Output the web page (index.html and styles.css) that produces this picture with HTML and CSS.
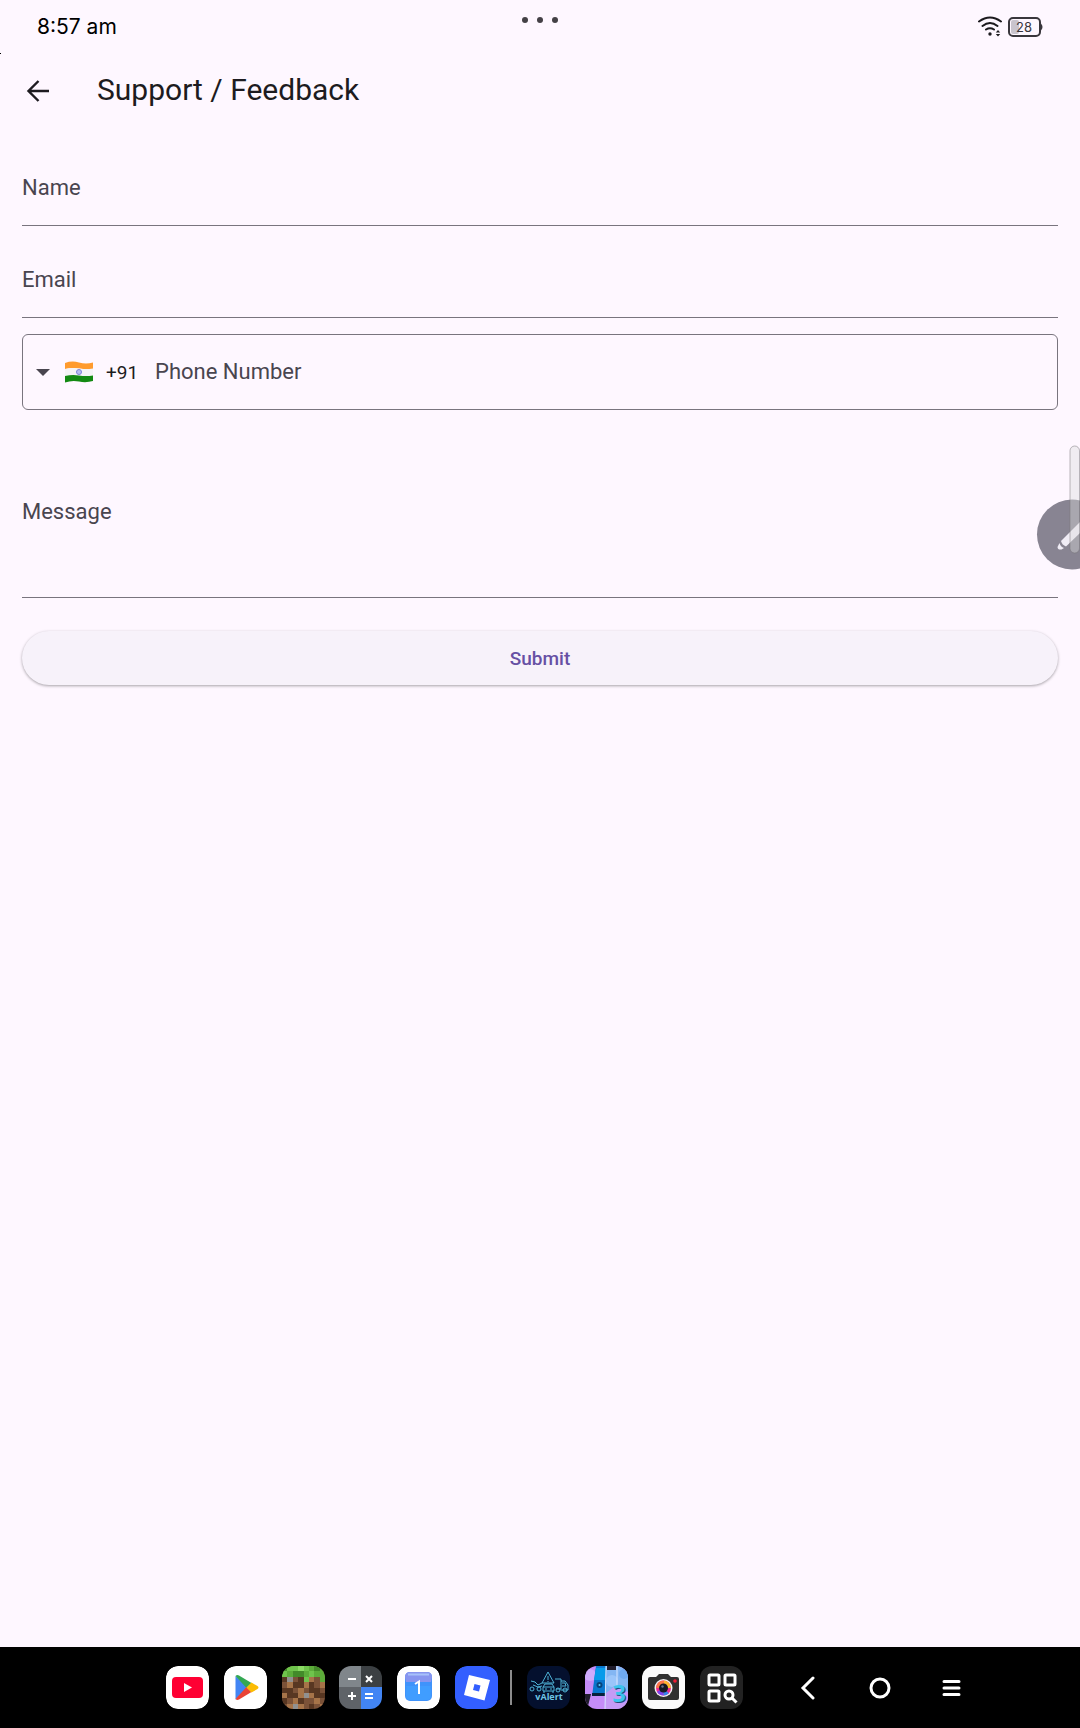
FILE: index.html
```html
<!DOCTYPE html>
<html lang="en">
<head>
<meta charset="UTF-8">
<meta name="viewport" content="width=device-width, initial-scale=1.0">
<title>Support / Feedback</title>
<link rel="stylesheet" href="styles.css">
</head>
<body>
<div class="status-bar">
    <span class="time">8:57 am</span>
    <svg class="window-dots" width="36" height="8" viewBox="0 0 36 8" fill="#444046">
        <circle cx="3" cy="4" r="3"/><circle cx="18" cy="4" r="3"/><circle cx="33" cy="4" r="3"/>
    </svg>
    <div class="status-icons">
        <svg width="26" height="22" viewBox="0 0 26 22" fill="none" stroke="#1c1a1e" stroke-width="2" stroke-linecap="round">
            <path d="M2 5.500Q13 -2.500 24 5.500M5.500 10Q13 4 20.500 10M9 13.500Q13 11 17 13.500"/>
            <circle cx="13" cy="18" r="1.700" fill="#1c1a1e" stroke="none"/>
            <path d="M21 14l2.200 2.600h-4.400zM21 20.500l2.200-2.600h-4.400z" fill="#1c1a1e" stroke="none"/>
        </svg>
        <svg width="36" height="22" viewBox="0 0 36 22">
            <rect x="4" y="4" width="8" height="14" rx="2" fill="#c9c4cd"/>
            <rect x="2" y="2" width="31" height="18" rx="4" fill="none" stroke="#39363c" stroke-width="2"/>
            <path d="M34 7.500q3 3.500 0 7z" fill="#39363c"/>
            <text class="battery-text" x="17" y="16" text-anchor="middle">28</text>
        </svg>
    </div>
</div>

<header class="app-bar">
    <button class="back" aria-label="Back">
        <svg width="24" height="24" viewBox="0 0 24 24" fill="none" stroke="#1d1b20" stroke-width="2.400">
            <path d="M23 12H2.500M12.500 2L2.500 12l10 10"/>
        </svg>
    </button>
    <h1>Support / Feedback</h1>
</header>

<form class="feedback">
    <div class="field">
        <label for="name">Name</label>
        <input type="text" id="name">
    </div>
    <div class="field">
        <label for="email">Email</label>
        <input type="email" id="email">
    </div>
    <div class="field phone">
        <svg width="14" height="8" viewBox="0 0 14 8"><path d="M0 1h14L7 8z" fill="#49454f"/></svg>
        <svg class="flag" width="30" height="22" viewBox="0 0 30 22">
            <path d="M1 2Q8 -.500 15 1.500T29 1.500v6.500Q22 8.500 15 7.500T1 8z" fill="#ff9b2e"/>
            <path d="M1 8Q8 6.500 15 7.500t14 0V14.500Q22 15.500 15 14.500T1 15z" fill="#f4f3f5"/>
            <path d="M1 15Q8 13.500 15 14.500t14 0V20Q22 22 15 20.500T1 21.500z" fill="#138a12"/>
            <circle cx="15" cy="11" r="2.500" fill="#b9bdf0" stroke="#7b82d8"/>
        </svg>
        <select class="dial-code" aria-label="Country code">
            <option>+91</option>
        </select>
        <label for="phone">Phone Number</label>
        <input type="tel" id="phone">
    </div>
    <div class="field message">
        <label for="message">Message</label>
        <textarea id="message" rows="3"></textarea>
    </div>
    <button type="submit" class="submit">Submit</button>
</form>

<!-- stylus shortcut and the edge handle on top of it -->
<svg class="edge-tools" width="44" height="126" viewBox="0 0 44 126">
    <circle cx="36" cy="89.500" r="35" fill="#888492"/>
    <path d="M25 96L44 77v11L30 101.500q-4-1.500-5-5.500z" fill="#f0ecf5"/>
    <path d="M23.500 98q1 4 4.500 5l-2.500 1.500q-4 .5-4-2.500z" fill="#f0ecf5"/>
    <rect x="34" y="1" width="9.500" height="107" rx="4.700" fill="#dddddd" fill-opacity=".4" stroke="#77757a" stroke-opacity=".5"/>
</svg>

<footer class="dock">
    <div class="apps main-apps">
        <svg class="app" viewBox="0 0 43 43">
            <rect width="43" height="43" rx="12" fill="#fff"/>
            <rect x="6" y="11" width="31" height="21" rx="4" fill="#ff0033"/>
            <path d="M18 17v9l8-4.500z" fill="#fff"/>
        </svg>
        <svg class="app" viewBox="0 0 43 43">
            <rect width="43" height="43" rx="12" fill="#fff"/>
            <path d="M11.500 10v23.500L24 21.500z" fill="#4285f4"/>
            <path d="M11.500 10q1.500-1.500 3.500-.500L27.500 17l-5 5z" fill="#34a853"/>
            <path d="M11.500 33q1.500 1.500 3.500.500L27.500 26l-5-5z" fill="#ea4335"/>
            <path d="M27.500 16.500l6 3.500q2 1.500 0 3l-6 3.500-5-5z" fill="#fbbc04"/>
        </svg>
        <svg class="app" viewBox="0 0 8 8" shape-rendering="crispEdges">
            <rect width="8" height="8" fill="#7b5238"/>
            <path d="M0 0h8v2H0zM4 2h1v1H4zM7 2h1v1H7z" fill="#5cac3a"/>
            <path d="M1 0h2v1H1zM4 0h1v1H4zM0 1h1v1H0zM5 1h1v1H5zM4 2h1v1H4z" fill="#6fc44c"/>
            <path d="M3 0h1v1H3z" fill="#8bdb64"/>
            <path d="M0 0h1v1H0zM2 1h2v1H2zM6 0h1v1H6z" fill="#438a2a"/>
            <path d="M0 2h1v1H0zM3 2h1v1H3zM2 3h1v1H2zM5 3h1v1H5zM0 4h2v1H0zM5 4h2v1H5zM1 5h2v1H1zM6 5h2v1H6zM0 6h1v1H0zM3 6h1v1H3zM5 7h1v1H5zM3 3h1v1H3z" fill="#583722"/>
            <path d="M5 2h1v1H5zM1 3h1v1H1zM4 3h1v1H4zM7 3h1v1H7zM3 4h1v1H3zM0 5h1v1H0zM3 5h1v1H3zM5 5h1v1H5zM2 6h1v1H2zM6 6h1v1H6zM1 7h1v1H1zM3 7h1v1H3zM7 7h1v1H7z" fill="#a67449"/>
            <path d="M1 2h1v1H1zM4 5h1v1H4zM2 7h1v1H2z" fill="#919191"/>
        </svg>
        <svg class="app" viewBox="0 0 43 43">
            <path d="M0 0h22v21H0z" fill="#80868b"/>
            <path d="M22 0h21v21H22z" fill="#3c4043"/>
            <path d="M0 21h22v22H0z" fill="#5f6368"/>
            <path d="M22 21h21v22H22z" fill="#4285f4"/>
            <path d="M9 13h8M27 10l6 6M33 10l-6 6M9 30h8M13 26v8M26 28h8M26 32h8" stroke="#fff" stroke-width="2" fill="none"/>
        </svg>
        <svg class="app" viewBox="0 0 43 43">
            <rect width="43" height="43" rx="12" fill="#fff"/>
            <rect x="8" y="6" width="27" height="29" rx="5" fill="#3f93fb"/>
            <path d="M13 6h17q5 0 5 5l-1 5H9l-1-5q0-5 5-5z" fill="#8795ef"/>
            <path d="M11 8.500h21" stroke="#a7c1fa" stroke-width="2"/>
            <path d="M9 20Q10 21 9 24v6q0 4 4 4h17q4 0 4-4v-6q-1-3 0-4z" fill="#409dff"/>
            <path d="M18 18l4-2.500V28" stroke="#fff" stroke-width="2" fill="none"/>
        </svg>
        <svg class="app" viewBox="0 0 43 43">
            <rect width="43" height="43" rx="12" fill="#335fff"/>
            <path fill-rule="evenodd" d="M14 9l21 5-5.500 20.500-20.500-5.500zM19.500 18l-1.500 6 6 1.500 1.500-6z" fill="#fff"/>
        </svg>
    </div>
    <span class="divider"></span>
    <div class="apps recent-apps">
        <svg class="app" viewBox="0 0 43 43">
            <rect width="43" height="43" fill="#04102e"/>
            <g fill="none" stroke="#4fb4d8" stroke-linejoin="round">
                <path d="M21 6l-6 11h12zM21 10v4M21 15v1M16 25v-4l2-3h7l2 3v4zM16 21h11M17 25v2M26 25v2M18 23h2M23 23h2"/>
                <path d="M4 15l4 1 3 3 4-2M6 19l5 2 4-1M28 13h6v10h-5M34 15h4l3 4v5h-7M35 17h3l1 3h-4"/>
                <circle cx="5" cy="23" r="2"/><circle cx="12" cy="23" r="2"/><circle cx="31" cy="24" r="2"/><circle cx="38" cy="24" r="2"/>
            </g>
            <text class="valert-text" x="22" y="34" text-anchor="middle">vAlert</text>
        </svg>
        <svg class="app" viewBox="0 0 43 43">
            <rect width="43" height="43" fill="#c58cf8"/>
            <path d="M20 0h23v28L20 43z" fill="#83b6f3"/>
            <path d="M20 28l10-8 13 6v17H20z" fill="#c69bf6"/>
            <circle cx="27" cy="15" r="6" fill="#9ac5fa"/><circle cx="39" cy="8" r="5" fill="#6faaf0"/><circle cx="5" cy="9" r="6" fill="#cfabfb"/>
            <path d="M11 0h10l-1 30H7z" fill="#0876cd"/>
            <path d="M11 2h10l-1 12H9z" fill="#079bea"/>
            <path d="M7 27h13v3H7z" fill="#07213c"/>
            <circle cx="14.500" cy="19" r="3" fill="#06427c"/><circle cx="14.500" cy="19" r="1" fill="#5bd7ff"/>
            <path d="M22 0h9v4h-9zM0 28h6l-3 12H0z" fill="#211d2c"/>
            <path d="M21 0l-1 43M32 0v20" stroke="#d6e4ff"/>
            <text class="three-shadow" x="35" y="37" text-anchor="middle">3</text>
            <text class="three" x="34" y="36" text-anchor="middle">3</text>
        </svg>
        <svg class="app" viewBox="0 0 43 43">
            <rect width="43" height="43" fill="#fafafa"/>
            <path d="M8 11h6l3-3h9l3 3h6q2 0 2 2v19q0 2-2 2H8q-2 0-2-2V13q0-2 2-2z" fill="#303030"/>
            <circle cx="21.500" cy="22" r="9" fill="#f2f2f2"/>
            <circle cx="21.500" cy="22" r="7.500" fill="#ed2b93"/>
            <path d="M21.500 22v-7.500a7.500 7.500 0 0 1 7.500 7.500z" fill="#ffb52e"/>
            <path d="M21.500 22H14a7.500 7.500 0 0 1 7.500-7.500z" fill="#ff7845"/>
            <path d="M21.500 22v7.500a7.500 7.500 0 0 1-6.500-3.800z" fill="#7d43ef"/>
            <path d="M21.500 22l5.300 5.300a7.500 7.500 0 0 1-5.300 2.200z" fill="#3884ed"/>
            <circle cx="21.500" cy="22" r="4.500" fill="#171923"/><circle cx="20.500" cy="20.500" r="1.200" fill="#68708c"/>
            <circle cx="33" cy="15" r="1.800" fill="#ef1b35"/>
        </svg>
        <svg class="app" viewBox="0 0 43 43">
            <rect width="43" height="43" fill="#222"/>
            <g fill="none" stroke="#fff" stroke-width="3">
                <rect x="9" y="9" width="10" height="10" rx="1"/><rect x="25" y="9" width="10" height="10" rx="1"/><rect x="9" y="25" width="10" height="10" rx="1"/>
                <circle cx="29" cy="29" r="4"/><path d="M32 32l4.500 4.500"/>
            </g>
        </svg>
    </div>
    <nav class="system-nav">
        <button aria-label="Back">
            <svg width="24" height="24" viewBox="0 0 24 24"><path d="M17 2L7 12l10 10"/></svg>
        </button>
        <button aria-label="Home">
            <svg width="24" height="24" viewBox="0 0 24 24"><circle cx="12" cy="12" r="9"/></svg>
        </button>
        <button aria-label="Recent apps">
            <svg width="24" height="24" viewBox="0 0 24 24"><path d="M4 5.500h15M4 12h15M4 18.500h15"/></svg>
        </button>
    </nav>
</footer>
</body>
</html>
```

FILE: styles.css
```css
* {
    box-sizing: border-box;
}

body {
    margin: 0;
    min-height: 100vh;
    display: flex;
    flex-direction: column;
    position: relative;
    font-family: Roboto, sans-serif;
    background-color: #fef7ff;
    color: #1d1b20;
}

button {
    border: none;
    padding: 0;
    background: none;
    font-family: inherit;
    cursor: pointer;
}

svg {
    display: block;
    flex: none;
}

/* status bar */
.status-bar {
    position: relative;
    display: grid;
    grid-template-columns: 1fr auto 1fr;
    align-items: center;
    height: 54px;
    padding: 0 37px;
}

.status-bar::after {
    content: "";
    position: absolute;
    left: 0;
    bottom: 0;
    width: 1px;
    height: 1px;
    background-color: #000;
}

.time {
    font-family: Inter, sans-serif;
    font-size: 21px;
    line-height: 24px;
    color: #000;
}

.window-dots {
    align-self: start;
    margin-top: 16px;
}

.status-icons {
    display: flex;
    justify-content: flex-end;
    gap: 4px;
}

.battery-text {
    font: 13px Inter, sans-serif;
    fill: #39363c;
}

/* app bar */
.app-bar {
    display: flex;
    align-items: center;
    gap: 47px;
    height: 74px;
    padding: 0 26px;
}

.app-bar h1 {
    margin: 0;
    padding-bottom: 2px;
    font-size: 30px;
    line-height: 36px;
    font-weight: 400;
}

/* form */
.feedback {
    display: flex;
    flex-direction: column;
    gap: 16px;
    padding: 22px;
}

.field {
    display: flex;
    align-items: center;
    gap: 8px;
    height: 76px;
    border-bottom: 1px solid #79747e;
    font-size: 22px;
    line-height: 32px;
    color: #49454f;
}

.field input,
.field textarea {
    flex: 1;
    min-width: 0;
    border: none;
    padding: 0;
    outline: none;
    resize: none;
    background: none;
    font: inherit;
    color: #1d1b20;
}

.phone {
    padding: 0 13px;
    border: 1px solid #79747e;
    border-radius: 6px;
}

.flag {
    margin-left: 6px;
}

.dial-code {
    appearance: none;
    border: none;
    margin: 0 8px 0 4px;
    padding: 0;
    outline: none;
    background: none;
    font-family: inherit;
    font-size: 19px;
    color: #1d1b20;
}

.message {
    height: 172px;
}

.submit {
    height: 54px;
    margin-top: 17px;
    border-radius: 27px;
    background-color: #f7f2fa;
    box-shadow: 0 1px 3px rgba(0, 0, 0, 0.35);
    font-size: 19px;
    font-weight: 500;
    color: #6750a4;
}

.edge-tools {
    position: absolute;
    top: 445px;
    right: 0;
}

/* dock */
.dock {
    display: flex;
    align-items: center;
    height: 81px;
    margin-top: auto;
    padding-left: 166px;
    background-color: #000;
}

.apps {
    display: flex;
    justify-content: space-between;
}

.main-apps {
    width: 332px;
}

.recent-apps {
    width: 216px;
}

.app {
    width: 43px;
    height: 43px;
    border-radius: 12px;
}

.divider {
    width: 2px;
    height: 35px;
    margin: 0 15px 0 12px;
    background-color: #8c8c8c;
}

.valert-text {
    font: bold 9px "Open Sans", sans-serif;
    fill: #6ec5e5;
}

.three,
.three-shadow {
    font: bold 24px "Open Sans", sans-serif;
    fill: #3bc4ee;
}

.three-shadow {
    fill: #234b7a;
}

.system-nav {
    display: flex;
    gap: 48px;
    margin-left: 53px;
}

.system-nav svg {
    fill: none;
    stroke: #fff;
    stroke-width: 3;
    stroke-linecap: round;
}
```
